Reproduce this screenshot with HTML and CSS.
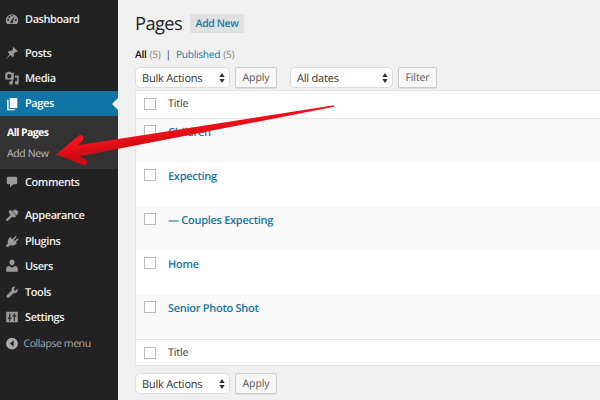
FILE: index.html
```html
<!DOCTYPE html>
<html lang="en">
<head>
<meta charset="utf-8">
<title>Pages</title>
<link rel="stylesheet" href="styles.css">
</head>
<body>
<div class="app">
  <nav class="sidebar">
    <a class="item"><svg class="icon" viewBox="0 0 14 14"><path d="M2 12A6.200 6.200 0 1 1 12 12Z"/><g class="cut"><circle cx="3.2" cy="8" r=".9"/><circle cx="4.3" cy="5" r=".9"/><circle cx="7" cy="3.8" r=".8"/><circle cx="10.8" cy="8" r=".9"/><path d="M9.7 4.2 8 9.6a1.3 1.3 0 1 1-1.7-.8Z"/></g></svg><span>Dashboard</span></a>
    <a class="item spaced"><svg class="icon" viewBox="0 0 14 14"><path d="M8.200.8 13 5.400l-1.400.5-.9-.2-2 2.200.1 2.100-1.100 1.200-2.100-2.100L.8 13.200l3.800-5L2.700 6.100l1.200-1.100 2.200.1 2-2-.3-.9Z"/></svg><span>Posts</span></a>
    <a class="item"><svg class="icon" viewBox="0 0 14 14"><path fill-rule="evenodd" d="M.3 1.700h1.500l.7-1h3l.7 1h2.600v6.800H.3ZM4.300 3a2.100 2.100 0 1 0 .01 0ZM10 4.600h3.700v7.100a1.900 1.900 0 1 1-1.500-1.900V6.700H10ZM7.800 8.500v3.300a1.800 1.800 0 1 1-1.400-1.600V8.500Z"/></svg><span>Media</span></a>
    <a class="item current"><svg class="icon" viewBox="0 0 14 14"><path d="M4.700 1h7.600v10H4.700ZM2 2.800h1.600v9.300h6.200v1.200H2Z"/></svg><span>Pages</span></a>
    <div class="submenu"><a class="selected">All Pages</a><a>Add New</a></div>
    <a class="item"><svg class="icon" viewBox="0 0 14 14"><path d="M3.200 1.700h7.600q1.400 0 1.400 1.400v4.700q0 1.400-1.400 1.400H8.300L5 12.500V9.200H3.200Q1.800 9.200 1.800 7.800V3.100q0-1.400 1.400-1.400Z"/></svg><span>Comments</span></a>
    <a class="item spaced"><svg class="icon" viewBox="0 0 14 14"><path d="M4.800 1.500 7.300 3 8.700 2.200 12.600 6.300 11.600 7.400 7.100 2.900ZM8.600 2.100 10.800 1.600 13.500 3.700 12.900 5.700 11.800 5.500ZM3.500 3.400 5.600 1.700 11.300 7.900 9.600 9.600 7.300 8.700 2.700 12.900Q1.100 13.500.8 11.700L5.300 7.300Z"/></svg><span>Appearance</span></a>
    <a class="item"><svg class="icon" viewBox="0 0 14 14"><path d="m4.100 3.900 1.300-.6 1.900 1.900 3-3q1.100-.5 1.300.7l-3 3 1.200 1.200 2.500-2.500q1.100-.4 1.200.8l-2.600 2.600 1 1-.7 1.100q-3.100 2.500-5.900.9l-1.800 1.800H1.200v-1.700L3 9.400Q1.900 6.500 4.100 3.900Z"/></svg><span>Plugins</span></a>
    <a class="item"><svg class="icon" viewBox="0 0 14 14"><path d="M7 .8c2.500 0 3 2 2.200 4C8.700 6.100 8 6.500 7 6.500S5.300 6.100 4.800 4.800C4 2.800 4.500.8 7 .8ZM1.200 12.800V9.700Q1.300 7.300 4.200 7L7 8.800 9.800 7q2.900.3 3 2.700v3.100Z"/></svg><span>Users</span></a>
    <a class="item"><svg class="icon" viewBox="0 0 14 14"><path d="M12.700 3.500q.7 2.600-1 3.900-1.200.9-2.800.5L4 12.400q-1.200.9-2.200 0t0-2.200l4.800-4.600q-.5-1.800.6-3 1.300-1.400 3.500-.9L8.900 3.600l.4 1.600 1.600.3Z"/></svg><span>Tools</span></a>
    <a class="item"><svg class="icon" viewBox="0 0 14 14"><path d="M1.200 1.700h11.600v10.600H1.200Z"/><path class="cut" d="M4.200 3.200h1.100v4.400h1.300v1.100H5.300v2.200H4.200V8.700H2.900V7.600h1.300ZM8.800 11V6.400H7.400V5.200h1.400v-2h1.100v2h1.400v1.200H9.900V11Z"/></svg><span>Settings</span></a>
    <a class="item collapse"><svg class="icon" viewBox="0 0 14 14"><circle cx="7" cy="7.600" r="5.900"/><path class="cut" d="M8.700 4.500v6.200L4.900 7.600Z"/></svg><span>Collapse menu</span></a>
  </nav>
  <main class="content">
    <header class="heading"><h1>Pages</h1><a class="add">Add New</a></header>
    <div class="views"><b>All</b><i>(5)</i><span class="bar">|</span><a>Published</a><i>(5)</i></div>
    <div class="toolbar">
      <div class="select bulk"><span>Bulk Actions</span><svg viewBox="0 0 6 10"><path d="M3 0 5.700 4H.3ZM.3 6h5.400L3 10Z"/></svg></div>
      <button class="apply">Apply</button>
      <div class="select dates"><span>All dates</span><svg viewBox="0 0 6 10"><path d="M3 0 5.700 4H.3ZM.3 6h5.400L3 10Z"/></svg></div>
      <button class="filter">Filter</button>
    </div>
    <section class="table">
      <div class="head"><span class="check"></span><span>Title</span></div>
      <div class="row"><span class="check"></span><a>Children</a></div>
      <div class="row"><span class="check"></span><a>Expecting</a></div>
      <div class="row"><span class="check"></span><a>— Couples Expecting</a></div>
      <div class="row"><span class="check"></span><a>Home</a></div>
      <div class="row"><span class="check"></span><a>Senior Photo Shot</a></div>
      <div class="foot"><span class="check"></span><span>Title</span></div>
    </section>
    <div class="toolbar bottom">
      <div class="select bulk"><span>Bulk Actions</span><svg viewBox="0 0 6 10"><path d="M3 0 5.700 4H.3ZM.3 6h5.400L3 10Z"/></svg></div>
      <button class="apply">Apply</button>
    </div>
  </main>
  <svg class="arrow" viewBox="0 0 600 400">
    <defs><linearGradient id="red" gradientUnits="userSpaceOnUse" x1="120" y1="137" x2="122" y2="150"><stop offset="0" stop-color="#f5111b"/><stop offset="1" stop-color="#cb0b15"/></linearGradient></defs>
    <path fill="url(#red)" d="M56 154.500 78.500 135.800C81.500 133.500 85 137 82.500 140.500L78 145.300 334 105.200V106.800L80 156.300 85.500 159.500C89.500 162 86.500 166 82.500 164.800Z"/>
  </svg>
</div>
</body>
</html>
```

FILE: styles.css
```css
* { box-sizing: border-box; }
body { margin: 0; font-family: "Open Sans", sans-serif; font-size: 11px; letter-spacing: -.28px; color: #333; text-rendering: geometricPrecision; }
.app { position: relative; display: flex; width: 600px; height: 400px; overflow: hidden; background: #f0f0f0; }
.sidebar { width: 118px; flex: none; padding-top: 6px; background: #222; color: #eee; }
.item { position: relative; display: flex; align-items: center; height: 25.5px; padding-left: 5px; gap: 6px; font-weight: 600; letter-spacing: -.42px; white-space: nowrap; }
.item span { padding-top: 1.200px; }
.spaced { margin-top: 8.300px; }
.icon { width: 14px; height: 14px; flex: none; fill: #999; }
.cut { fill: #222; }
.current { background: #1074a4; color: #fff; }
.current span { padding-top: 0; }
.current .icon { fill: #fff; }
.current::after { content: ""; position: absolute; right: 0; top: 7px; border: 6px solid transparent; border-left: 0; border-right-color: #f0f0f0; }
.submenu { height: 52.5px; padding: 6.500px 7px 3px; background: #333; display: flex; flex-direction: column; font-size: 10.500px; letter-spacing: -.38px; color: #bbb; }
.submenu a { height: 21px; line-height: 21px; }
.submenu .selected { color: #fff; font-weight: 700; letter-spacing: -.6px; }
.collapse { font-weight: 400; color: #aaa; gap: 4.500px; font-size: 10.500px; }
.collapse span { padding-top: 2px; }
.collapse .icon { fill: #aaa; }
.content { flex: 1; min-width: 0; padding: 10px 0 0 17px; }
.heading { display: flex; align-items: center; height: 26px; gap: 9px; }
h1 { width: 46px; margin: 0; padding-top: 1px; font-size: 18.300px; font-weight: 400; letter-spacing: -.6px; line-height: 26px; color: #222; }
.add { width: 54px; text-align: center; height: 19px; line-height: 20px; font-weight: 600; letter-spacing: -.4px; background: #e0e0e0; color: #1b7ba8; font-size: 10.500px; }
.views { display: flex; height: 18px; line-height: 18px; margin-top: 9px; font-size: 10.200px; }
.views b { color: #111; font-weight: 600; }
.views i { font-style: normal; color: #888; margin-left: 3px; }
.bar { margin: 0 5px 0 5px; }
.views a { color: #1b7ba8; }
.toolbar { display: flex; height: 22px; margin-top: 4px; }
.select { display: flex; align-items: center; justify-content: space-between; height: 21px; padding: 0 4px 0 6px; border: 1px solid #ddd; border-radius: 5px; background: #fff; font-size: 11px; letter-spacing: -.2px; }
.select span { padding-top: 1px; }
.select svg { width: 6px; height: 10px; fill: #333; }
.bulk { width: 95px; }
.dates { width: 103px; margin-left: 13px; }
button { height: 21px; padding: 1.500px 0 0; border: 1px solid #ccc; border-radius: 2px; background: #f7f7f7; color: #555; font: 10.500px "Open Sans", sans-serif; letter-spacing: -.1px; text-rendering: geometricPrecision; box-shadow: 0 1px #ddd; }
.apply { width: 42px; margin-left: 5px; }
.filter { width: 39px; margin-left: 5px; }
.table { margin-top: 1px; border: 1px solid #e5e5e5; border-right: 0; background: #fff; height: 276px; }
.head, .foot { display: flex; height: 27px; align-items: center; padding: 0 0 1px 8px; gap: 12px; font-size: 10.600px; letter-spacing: -.1px; }
.head { height: 28px; border-bottom: 1px solid #e4e4e4; }
.foot { border-top: 1px solid #e4e4e4; }
.check { width: 12px; height: 12px; flex: none; border: 1px solid #bbb; background: #fff; }
.row { display: flex; height: 44px; gap: 12px; padding: 6px 0 0 8px; line-height: 15.500px; font-weight: 600; color: #1478a6; }
.row:nth-child(even) { background: #f9f9f9; }
.bottom { margin-top: 7px; }
.arrow { position: absolute; inset: 0; width: 600px; height: 400px; pointer-events: none; }
```
